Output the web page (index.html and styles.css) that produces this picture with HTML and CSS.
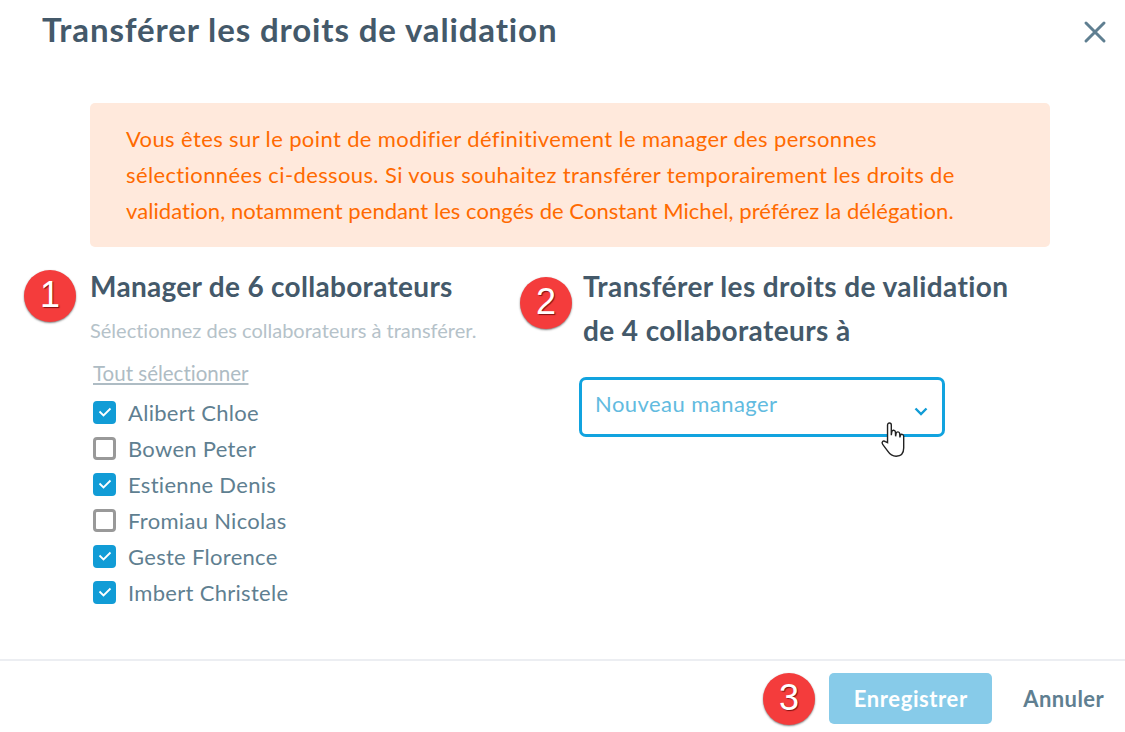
FILE: index.html
```html
<!DOCTYPE html>
<html lang="fr">
  <head>
    <meta charset="UTF-8" />
    <title>Transférer les droits de validation</title>
    <link rel="stylesheet" href="styles.css">
  </head>
  <body>
    <div class="modal">
      <div class="modal-header">
        <h1>Transférer les droits de validation</h1>
        <svg class="close" width="24" height="24" viewBox="0 0 24 24">
          <path d="M3 3 L21 21 M21 3 L3 21" />
        </svg>
      </div>

      <div class="modal-body">
        <div class="alert">
          <p>Vous êtes sur le point de modifier définitivement le manager des personnes</p>
          <p>sélectionnées ci-dessous. Si vous souhaitez transférer temporairement les droits de</p>
          <p class="tight">validation, notamment pendant les congés de Constant Michel, préférez la délégation.</p>
        </div>

        <div class="columns">
          <div class="col-left">
            <span class="badge badge-1">1</span>
            <h2>Manager de 6 collaborateurs</h2>
            <p class="hint">Sélectionnez des collaborateurs à transférer.</p>
            <a class="select-all">Tout sélectionner</a>
            <ul class="people">
              <li><span class="check on"><svg width="14" height="10" viewBox="0 0 14 10"><path d="M1.5 4.5 L5.5 8.5 L12.5 1.5" /></svg></span>Alibert Chloe</li>
              <li><span class="check"></span>Bowen Peter</li>
              <li><span class="check on"><svg width="14" height="10" viewBox="0 0 14 10"><path d="M1.5 4.5 L5.5 8.5 L12.5 1.5" /></svg></span>Estienne Denis</li>
              <li><span class="check"></span>Fromiau Nicolas</li>
              <li><span class="check on"><svg width="14" height="10" viewBox="0 0 14 10"><path d="M1.5 4.5 L5.5 8.5 L12.5 1.5" /></svg></span>Geste Florence</li>
              <li><span class="check on"><svg width="14" height="10" viewBox="0 0 14 10"><path d="M1.5 4.5 L5.5 8.5 L12.5 1.5" /></svg></span>Imbert Christele</li>
            </ul>
          </div>

          <div class="col-right">
            <span class="badge badge-2">2</span>
            <h2>Transférer les droits de validation<br />de 4 collaborateurs à</h2>
            <div class="select">
              <span>Nouveau manager</span>
              <svg width="14" height="9" viewBox="0 0 14 9"><path d="M1.500 1.500 L7 7 L12.500 1.500" /></svg>
              <svg class="cursor" width="28" height="37" viewBox="0 0 26 34">
                <path d="M7 20 L7 3.5 C7 1 10.500 1 10.500 3.500 L10.500 13 L11 9.500 C11.500 8 14 8 14.300 10 L14.500 14 L15 11 C15.500 9.500 18 9.500 18.300 11.500 L18.500 15 L19 13 C19.500 11.500 22 12 22 14 L22 25 C22 30 19 32.500 15 32.500 C11 32.500 9 30.500 7 27.500 L2.500 21.500 C1 19.500 3 17.500 5 19 Z" />
              </svg>
            </div>
          </div>
        </div>
      </div>

      <div class="modal-footer">
        <span class="badge badge-3">3</span>
        <button class="btn-save">Enregistrer</button>
        <button class="btn-cancel">Annuler</button>
      </div>
    </div>
  </body>
</html>
```

FILE: styles.css
```css
* {
  margin: 0;
  padding: 0;
  box-sizing: border-box;
  font-family: "Lato", "Noto Sans", sans-serif;
  font-variant-ligatures: none;
}

body {
  background: #fff;
  color: #44596a;
}

.modal {
  position: relative;
  width: 1125px;
  height: 732px;
  display: flex;
  flex-direction: column;
  overflow: hidden;
}

.modal-header {
  height: 103px;
  display: flex;
  justify-content: space-between;
  padding: 7px 17px 0 42px;
}
.modal-header h1 {
  font-size: 33px;
  line-height: 44px;
  font-weight: 700;
  letter-spacing: 0.87px;
  color: #44596a;
}
.close {
  margin-top: 13px;
  margin-right: 1px;
}
.close path {
  fill: none;
  stroke: #5f7f91;
  stroke-width: 3;
  stroke-linecap: round;
}

.modal-body {
  flex: 1;
  padding-left: 90px;
  padding-right: 75px;
}

.alert {
  background: #ffe9dc;
  color: #ff6a00;
  border-radius: 5px;
  padding: 18px 36px;
  height: 144px;
  font-size: 22px;
  line-height: 36px;
  letter-spacing: 0.38px;
  white-space: nowrap;
  margin-bottom: 17px;
}
.alert .tight {
  letter-spacing: 0.06px;
}

.columns {
  display: flex;
}
.col-left {
  width: 493px;
}
.col-right {
  flex: 1;
}

h2 {
  font-size: 28px;
  line-height: 44px;
  font-weight: 700;
  letter-spacing: 0.3px;
  color: #44596a;
}
.col-right h2 {
  letter-spacing: 0.4px;
}

.hint {
  font-size: 20px;
  line-height: 26px;
  color: #b5c2c9;
  margin-top: 9px;
}

.select-all {
  display: inline-block;
  margin-top: 17px;
  margin-left: 3px;
  font-size: 20.5px;
  line-height: 26px;
  color: #aebcc4;
  text-decoration: underline;
}

.people {
  list-style: none;
  margin-top: 8px;
  margin-left: 3px;
}
.people li {
  height: 36px;
  display: flex;
  align-items: center;
  gap: 12px;
  font-size: 22px;
  letter-spacing: 0.3px;
  color: #5f7f91;
}

.check {
  width: 23px;
  height: 23px;
  border: 3px solid #999;
  border-radius: 4px;
  display: flex;
  align-items: center;
  justify-content: center;
}
.check.on {
  background: #119cd6;
  border-color: #119cd6;
}
.check path {
  fill: none;
  stroke: #fff;
  stroke-width: 1.8;
}

.select {
  position: relative;
  width: 366px;
  height: 60px;
  margin-top: 25px;
  margin-left: -4px;
  border: 3px solid #11a3df;
  border-radius: 7px;
  display: flex;
  align-items: center;
  justify-content: space-between;
  padding: 0 14px 0 13px;
  font-size: 22px;
  letter-spacing: 0.45px;
  color: #62bbe0;
}
.select span {
  margin-top: -8px;
}
.select > svg {
  margin-top: 8px;
}
.select > svg path {
  fill: none;
  stroke: #119cd6;
  stroke-width: 2.4;
}
.select .cursor {
  position: absolute;
  left: 298px;
  top: 41px;
  margin: 0;
}
.select .cursor path {
  fill: #fff;
  stroke: #222;
  stroke-width: 1.3;
}

.badge {
  position: absolute;
  width: 52px;
  height: 52px;
  border-radius: 50%;
  background: #f43c3c;
  box-shadow: 0 1px 2px rgba(0, 0, 0, 0.5);
  color: #fff;
  font-family: "Liberation Sans", sans-serif;
  font-size: 36px;
  line-height: 50px;
  text-align: center;
  text-shadow: 1px 1px 1px rgba(80, 0, 0, 0.7);
}
.badge-1 {
  left: 24px;
  top: 270px;
}
.badge-2 {
  left: 520px;
  top: 277px;
}
.badge-3 {
  left: 763px;
  top: 673px;
}

.modal-footer {
  height: 73px;
  border-top: 2px solid #eceef2;
  display: flex;
  align-items: flex-start;
  justify-content: flex-end;
  padding-top: 12px;
  padding-right: 21px;
}
.modal-footer button {
  border: 0;
  background: none;
  font-size: 22px;
  font-weight: 700;
}
.modal-footer .btn-save {
  width: 163px;
  height: 51px;
  border-radius: 5px;
  letter-spacing: 0.6px;
  color: #fff;
  background: #87cbe9;
}
.modal-footer .btn-cancel {
  height: 51px;
  margin-left: 31px;
  letter-spacing: 0.4px;
  color: #5f7f91;
}
```
